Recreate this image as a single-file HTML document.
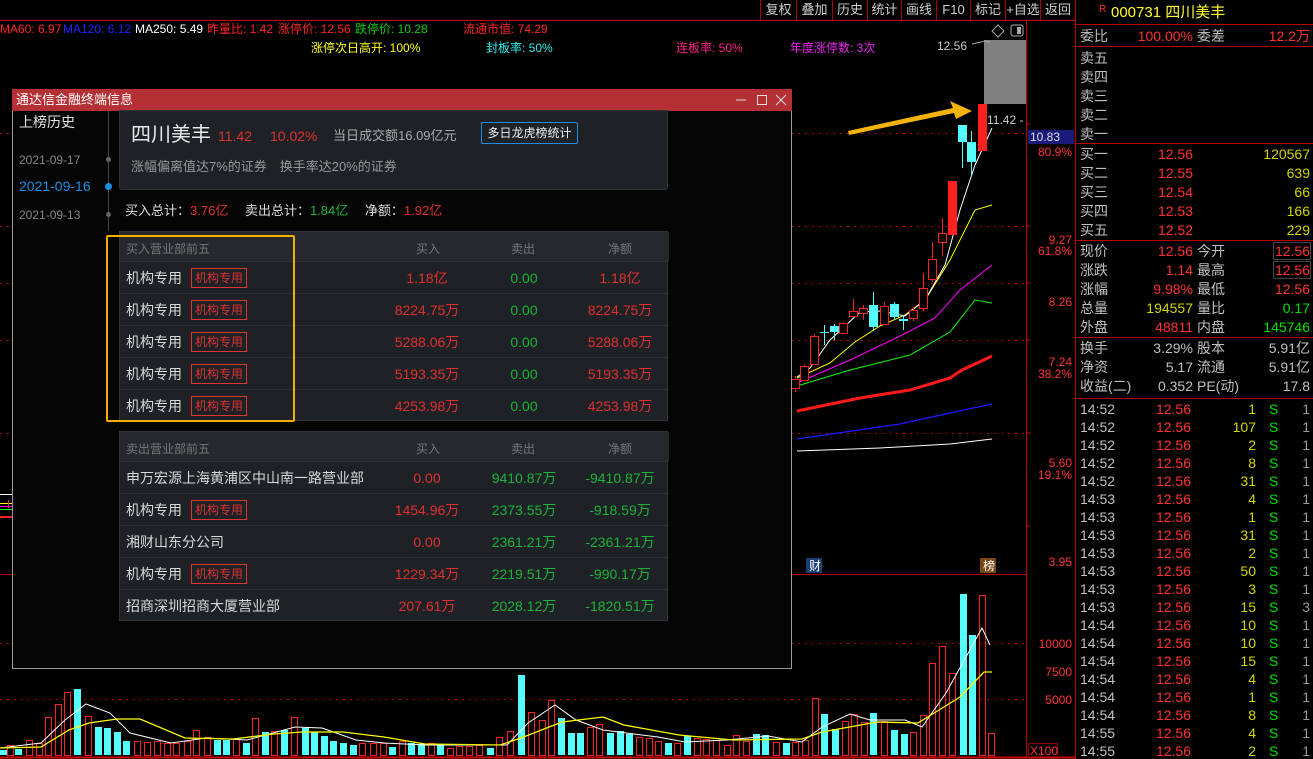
<!DOCTYPE html>
<html><head><meta charset="utf-8"><style>
*{margin:0;padding:0;box-sizing:border-box}
body{width:1313px;height:759px;background:#000;overflow:hidden;position:relative;font-family:"Liberation Sans","Noto Sans CJK SC",sans-serif}
.a{position:absolute;white-space:nowrap;line-height:1}
.t12{font-size:12px}
.rp{font-size:14px;color:#c0c0c0}
.tb span{position:absolute;top:0;height:20px;line-height:20px;font-size:13px;color:#d0d0d0;text-align:center;border-left:1px solid #a00}
.dlg{position:absolute;left:12px;top:89px;width:780px;height:580px;border:1px solid #9a9a9a;border-top:none;background:#050505}
.card{position:absolute;background:#1e2126;border:1px solid #30333a}
.row{position:absolute;left:0;width:549px;height:32px;border-top:1px solid #2d3036;font-size:14px}
.row span{position:absolute;top:9px;line-height:14px}
.nm{left:6px;color:#d8d8d8}
.tag{left:71px;top:6px!important;border:1px solid #d33;color:#d33;font-size:12px;padding:2px 3px;line-height:14px!important}
.c1,.c2,.c3{text-align:center;width:100px}
.c1{left:257px}.c2{left:354px}.c3{left:450px}
.r{color:#e03030}.g{color:#1db33a}
.hd{position:absolute;left:0;top:0;width:549px;height:29px;background:#25282d;font-size:12px;color:#777}
.hd span{position:absolute;top:8px}
</style></head><body>

<div class="tb" style="position:absolute;left:0;top:0;width:1075px;height:20px">
<span style="left:760px;width:36px">复权</span><span style="left:796px;width:36px">叠加</span><span style="left:832px;width:35px">历史</span><span style="left:867px;width:34px">统计</span><span style="left:901px;width:35px">画线</span><span style="left:936px;width:34px">F10</span><span style="left:970px;width:35px">标记</span><span style="left:1005px;width:35px">+自选</span><span style="left:1040px;width:35px">返回</span>
</div>
<div class="a" style="left:0;top:20px;width:1075px;height:1px;background:#c00"></div>

<svg class="a" style="left:0;top:0" width="1313" height="759">
<line x1="1026.5" y1="21" x2="1026.5" y2="759" stroke="#b00"/>
<line x1="1075.5" y1="0" x2="1075.5" y2="759" stroke="#b00"/>
<line x1="0" y1="574.5" x2="1026" y2="574.5" stroke="#b00"/>
<line x1="0" y1="757.5" x2="1075" y2="757.5" stroke="#c00" stroke-width="2"/>
<g stroke="#a00" stroke-dasharray="2,5">
<line x1="0" y1="133.5" x2="1026" y2="133.5"/><line x1="0" y1="226.5" x2="1026" y2="226.5"/><line x1="0" y1="283.5" x2="1026" y2="283.5"/><line x1="0" y1="340.5" x2="1026" y2="340.5"/><line x1="0" y1="433.5" x2="1026" y2="433.5"/>
<line x1="0" y1="643.5" x2="1026" y2="643.5"/><line x1="0" y1="699.5" x2="1026" y2="699.5"/>
</g>
<g stroke="#b00"><line x1="1026" y1="124" x2="1031" y2="124"/><line x1="1026" y1="226" x2="1031" y2="226"/><line x1="1026" y1="283" x2="1031" y2="283"/><line x1="1026" y1="340" x2="1031" y2="340"/><line x1="1026" y1="433" x2="1031" y2="433"/><line x1="1026" y1="526" x2="1031" y2="526"/></g>
<rect x="984" y="40" width="42" height="64" fill="#808080"/>
<!-- left-of-dialog remnants -->
<line x1="0" y1="494.5" x2="12" y2="494.5" stroke="#fff"/>
<line x1="0" y1="503.5" x2="12" y2="503.5" stroke="#ff0"/>
<line x1="0" y1="506.5" x2="12" y2="506.5" stroke="#f0f"/>
<line x1="0" y1="509.5" x2="12" y2="509.5" stroke="#1f1"/>
<line x1="0" y1="517" x2="12" y2="517" stroke="#f22" stroke-width="2"/>
<line x1="0" y1="574.5" x2="12" y2="574.5" stroke="#b00"/>
<line x1="8.5" y1="500" x2="8.5" y2="508" stroke="#f22"/>
<polyline fill="none" stroke="#fff" stroke-width="1" points="797,451 880,448 950,444 992,439"/>
<polyline fill="none" stroke="#1a1aff" stroke-width="1.3" points="797,439 900,424 950,413 992,404"/>
<polyline fill="none" stroke="#ff1a1a" stroke-width="3" points="797,411 860,398 910,390 950,378 962,370 975,364 992,356"/>
<polyline fill="none" stroke="#1f1" stroke-width="1" points="797,386 850,370 910,355 950,332 975,300 992,303"/>
<polyline fill="none" stroke="#f0f" stroke-width="1" points="797,383 850,360 900,336 935,318 960,290 992,265"/>
<polyline fill="none" stroke="#ff0" stroke-width="1" points="797,378 830,363 855,342 880,326 905,315 925,300 950,260 975,210 992,205"/>
<polyline fill="none" stroke="#fff" stroke-width="1" points="797,377 810,368 830,340 860,312 880,311 905,316 925,300 945,265 960,210 975,165 992,128"/>
<g id="cd"></g>
<g id="vol"></g>
<polyline fill="none" stroke="#fff" stroke-width="1" points="0,748 41,743 65,720 86,704 110,713 130,733 171,743 206,738 247,740 295,727 322,728 356,740 384,743 425,745 507,745 528,723 555,705 576,720 603,730 658,737 685,742 727,740 768,736 802,742 822,727 850,714 870,720 905,720 922,727 946,693 966,657 982,628 990,645"/>
<polyline fill="none" stroke="#ff0" stroke-width="1.3" points="0,748 41,747 69,730 89,723 117,719 140,719 185,738 233,739 274,734 302,732 343,732 384,737 425,744 500,745 521,738 562,722 603,717 624,725 679,735 733,740 802,739 822,732 877,722 918,723 960,697 984,672 992,672"/>
<polygon points="848,131 953,108 950,101 972,111 956,119 954,113 849,135" fill="#f6b40a"/>
<polygon points="33,490 80,416 74,412 88,405 86,421 82,418 35,491" fill="#f6b40a"/>
<polygon points="998,25 1004,31 998,37 992,31" fill="none" stroke="#aaa"/>
<rect x="1011" y="25" width="12" height="11" rx="2" fill="none" stroke="#aaa"/><rect x="1017" y="27" width="4" height="7" fill="#aaa"/>
<polyline points="972,44 985,41 990,42" fill="none" stroke="#aaa"/>
<rect x="806" y="558" width="16" height="15" fill="#1a3e6e"/><rect x="980" y="558" width="16" height="15" fill="#7a4414"/>
</svg>

<div class="a t12" style="left:0;top:23px;color:#f22">MA60: 6.97</div>
<div class="a t12" style="left:63px;top:23px;color:#22f">MA120: 6.12</div>
<div class="a t12" style="left:135px;top:23px;color:#fff">MA250: 5.49</div>
<div class="a t12" style="left:207px;top:23px;color:#f22">昨量比: 1.42</div>
<div class="a t12" style="left:278px;top:23px;color:#f22">涨停价: 12.56</div>
<div class="a t12" style="left:355px;top:23px;color:#1c1">跌停价: 10.28</div>
<div class="a t12" style="left:463px;top:23px;color:#f22">流通市值: 74.29</div>
<div class="a t12" style="left:311px;top:42px;color:#ff2">涨停次日高开: 100%</div>
<div class="a t12" style="left:486px;top:42px;color:#3ee">封板率: 50%</div>
<div class="a t12" style="left:676px;top:42px;color:#f28">连板率: 50%</div>
<div class="a t12" style="left:790px;top:42px;color:#e2e">年度涨停数: 3次</div>
<div class="a t12" style="left:937px;top:40px;color:#ccc">12.56</div>
<div class="a t12" style="left:987px;top:114px;color:#ccc">11.42 -</div>
<div class="a t12" style="left:809px;top:560px;color:#fff">财</div>
<div class="a t12" style="left:983px;top:560px;color:#fff">榜</div>
<div class="a t12" style="left:1028px;top:130px;width:46px;height:14px;background:#1a1a7a;color:#ddd;padding-left:2px;line-height:14px">10.83</div>
<div class="a t12" style="left:1028px;top:146px;width:44px;text-align:right;color:#f33">80.9%</div>
<div class="a t12" style="left:1028px;top:234px;width:44px;text-align:right;color:#f33">9.27</div>
<div class="a t12" style="left:1028px;top:245px;width:44px;text-align:right;color:#f33">61.8%</div>
<div class="a t12" style="left:1028px;top:296px;width:44px;text-align:right;color:#f33">8.26</div>
<div class="a t12" style="left:1028px;top:356px;width:44px;text-align:right;color:#f33">7.24</div>
<div class="a t12" style="left:1028px;top:368px;width:44px;text-align:right;color:#f33">38.2%</div>
<div class="a t12" style="left:1028px;top:457px;width:44px;text-align:right;color:#f33">5.60</div>
<div class="a t12" style="left:1028px;top:469px;width:44px;text-align:right;color:#f33">19.1%</div>
<div class="a t12" style="left:1028px;top:556px;width:44px;text-align:right;color:#f33">3.95</div>
<div class="a t12" style="left:1028px;top:638px;width:44px;text-align:right;color:#f33">10000</div>
<div class="a t12" style="left:1028px;top:666px;width:44px;text-align:right;color:#f33">7500</div>
<div class="a t12" style="left:1028px;top:694px;width:44px;text-align:right;color:#f33">5000</div>
<div class="a t12" style="left:1028px;top:743px;width:30px;color:#f33;border:1px solid #800;padding:1px">X100</div>

<div id="rpanel"></div>

<div class="a" style="left:12px;top:89px;width:780px;height:22px;background:#b53035;color:#fff;font-size:13px;padding:4px 0 0 4px">通达信金融终端信息
<svg style="position:absolute;left:724px;top:4px" width="52" height="14"><line x1="0" y1="7" x2="10" y2="7" stroke="#ddd"/><rect x="21.5" y="2.5" width="9" height="9" fill="none" stroke="#ddd"/><path d="M40 2L50 12M50 2L40 12" stroke="#ddd"/></svg></div>
<div class="dlg" style="top:111px;height:558px">
 <div class="a" style="left:6px;top:4px;font-size:14px;color:#e6e6e6">上榜历史</div>
 <div class="a" style="left:95px;top:0;width:1px;height:120px;background:#444"></div>
 <div class="a" style="left:93px;top:46px;width:5px;height:5px;border-radius:50%;background:#666"></div>
 <div class="a" style="left:92px;top:72px;width:7px;height:7px;border-radius:50%;background:#1a8fe0"></div>
 <div class="a" style="left:93px;top:101px;width:5px;height:5px;border-radius:50%;background:#666"></div>
 <div class="a" style="left:6px;top:43px;font-size:12px;color:#888">2021-09-17</div>
 <div class="a" style="left:6px;top:68px;font-size:14px;color:#1a8fe0">2021-09-16</div>
 <div class="a" style="left:6px;top:98px;font-size:12px;color:#888">2021-09-13</div>

 <div class="card" style="left:106px;top:-1px;width:549px;height:80px;border-radius:0 0 3px 3px">
  <div class="a" style="left:11px;top:14px;font-size:20px;color:#e8e8e8">四川美丰</div>
  <div class="a" style="left:98px;top:18px;font-size:14px;color:#e03030">11.42</div>
  <div class="a" style="left:150px;top:18px;font-size:14px;color:#e03030">10.02%</div>
  <div class="a" style="left:213px;top:18px;font-size:13px;color:#aaa">当日成交额16.09亿元</div>
  <div class="a" style="left:361px;top:11px;width:97px;height:22px;border:1px solid #1e8fe0;border-radius:2px;font-size:12px;color:#eee;text-align:center;line-height:20px">多日龙虎榜统计</div>
  <div class="a" style="left:11px;top:49px;font-size:13px;color:#999">涨幅偏离值达7%的证券　换手率达20%的证券</div>
 </div>
 <div class="a" style="left:112px;top:93px;font-size:13px;color:#ddd">买入总计：<span class="r">3.76亿</span>　 卖出总计：<span class="g">1.84亿</span>　 净额：<span class="r">1.92亿</span></div>

 <div class="card" style="left:106px;top:120px;width:549px;height:190px" id="t1">
  <div class="hd"><span style="left:6px">买入营业部前五</span><span style="left:296px">买入</span><span style="left:391px">卖出</span><span style="left:488px">净额</span></div>
 </div>
 <div class="card" style="left:106px;top:320px;width:549px;height:190px" id="t2">
  <div class="hd"><span style="left:6px">卖出营业部前五</span><span style="left:296px">买入</span><span style="left:391px">卖出</span><span style="left:488px">净额</span></div>
 </div>
 <div class="a" style="left:93px;top:124px;width:189px;height:187px;border:2px solid #f5b000;border-radius:2px"></div>
</div>

<script>
function rows(id,data){var el=document.getElementById(id),h='';data.forEach(function(d,i){h+='<div class="row" style="top:'+(29+i*32)+'px"><span class="nm">'+d[0]+'</span>'+(d[1]?'<span class="tag">机构专用</span>':'')+'<span class="c1 r">'+d[2]+'</span><span class="c2 g">'+d[3]+'</span><span class="c3 '+d[5]+'">'+d[4]+'</span></div>'});el.innerHTML+=h;}
var J='机构专用';
rows('t1',[[J,1,'1.18亿','0.00','1.18亿','r'],[J,1,'8224.75万','0.00','8224.75万','r'],[J,1,'5288.06万','0.00','5288.06万','r'],[J,1,'5193.35万','0.00','5193.35万','r'],[J,1,'4253.98万','0.00','4253.98万','r']]);
rows('t2',[['申万宏源上海黄浦区中山南一路营业部',0,'0.00','9410.87万','-9410.87万','g'],[J,1,'1454.96万','2373.55万','-918.59万','g'],['湘财山东分公司',0,'0.00','2361.21万','-2361.21万','g'],[J,1,'1229.34万','2219.51万','-990.17万','g'],['招商深圳招商大厦营业部',0,'207.61万','2028.12万','-1820.51万','g']]);

var NS='http://www.w3.org/2000/svg';
function R(g,x,y,w,h,fill,stroke){var r=document.createElementNS(NS,'rect');r.setAttribute('x',x);r.setAttribute('y',y);r.setAttribute('width',w);r.setAttribute('height',Math.max(h,1));r.setAttribute('fill',fill);if(stroke)r.setAttribute('stroke',stroke);g.appendChild(r);}
function L(g,x1,y1,x2,y2,c){var l=document.createElementNS(NS,'line');l.setAttribute('x1',x1);l.setAttribute('y1',y1);l.setAttribute('x2',x2);l.setAttribute('y2',y2);l.setAttribute('stroke',c);g.appendChild(l);}
var cd=document.getElementById('cd');
var C=[[795,379,388,376,392,'rh'],[804,366,380,365,381,'rh'],[814,336,364,334,365,'rh'],[824,332,333,325,345,'c'],[834,326,332,324,340,'c'],[843,323,333,322,334,'rh'],[853,311,316,299,317,'rh'],[863,308,313,305,320,'rh'],[873,305,327,292,331,'c'],[884,306,324,302,325,'rh'],[894,304,317,302,320,'c'],[903,319,321,315,330,'c'],[913,310,318,307,321,'rh'],[923,288,308,273,311,'rh'],[932,259,279,242,282,'rh'],[942,233,242,218,256,'rh'],[952,181,235,181,235,'rf'],[962,125,142,125,168,'c'],[971,142,162,131,175,'c'],[982,104,151,104,151,'rf']];
C.forEach(function(c){var x=c[0],col=c[5]=='c'?'#54fcfc':'#ff2020';L(cd,x+.5,c[3],x+.5,c[4],col);if(c[5]=='rh')R(cd,x-3.5,c[1]+.5,8,c[2]-c[1],'#000',col);else R(cd,x-4,c[1],9,c[2]-c[1],col);});
var V=[[0,'c',510],[10,'r',495],[22,'c',508],[38,'r',480],[52,'r',490],[66,'r',410],[80,'r',372],[94,'r',336],[108,'c',327],[124,'r',408],[138,'c',441],[152,'c',443],[166,'c',456],[180,'c',483],[195,'r',484],[210,'r',485],[225,'r',483],[239,'r',490],[253,'r',490],[268,'r',482],[282,'r',450],[297,'r',470],[312,'c',480],[326,'c',480],[340,'r',478],[354,'c',489],[368,'r',413],[382,'c',456],[396,'r',452],[410,'c',450],[424,'r',411],[440,'c',443],[454,'c',457],[468,'c',468],[482,'c',483],[496,'c',489],[510,'c',495],[524,'r',490],[540,'r',488],[554,'r',490],[568,'c',500],[582,'r',484],[596,'c',490],[610,'c',492],[624,'r',490],[638,'c',493],[652,'r',505],[666,'r',498],[680,'r',497],[694,'r',496],[710,'c',503],[724,'r',470],[740,'r',454],[756,'c',285],[770,'r',396],[786,'r',420],[800,'r',360],[814,'c',413],[828,'c',458],[842,'c',458],[856,'r',441],[870,'r',432],[886,'c',459],[900,'c',452],[914,'c',462],[928,'r',472],[942,'r',473],[956,'r',484],[970,'c',489],[984,'r',489],[998,'c',467],[1012,'r',474],[1026,'r',476],[1040,'r',479],[1056,'r',495],[1070,'r',465],[1084,'r',482],[1098,'c',462],[1112,'c',466],[1128,'r',487],[1142,'c',488],[1156,'r',485],[1170,'r',480],[1184,'r',354],[1198,'c',402],[1214,'c',447],[1228,'r',424],[1242,'r',403],[1256,'r',426],[1270,'c',398],[1286,'r',422],[1300,'c',450],[1314,'c',462],[1328,'r',456],[1342,'r',405],[1356,'r',249],[1370,'r',198],[1384,'r',280],[1400,'c',42],[1414,'c',164],[1428,'r',45],[1442,'r',460]];
var vg=document.getElementById('vol');
V.forEach(function(v){var x=Math.round(v[0]/1.459),y=Math.round(580+v[2]/3);if(v[1]=='c')R(vg,x,y,7,755-y,'#54fcfc');else R(vg,x+.5,y+.5,6,755-y,'none','#ff2020');});

var rp='',Y='#d4d400',RD='#ff3232',G='#00e000',GR='#c0c0c0';
function t(x,y,s,c,al,w,fs){rp+='<div class="a" style="left:'+x+'px;top:'+y+'px;color:'+c+';font-size:'+(fs||14)+'px;'+(al?'width:'+w+'px;text-align:right;':'')+'">'+s+'</div>';}
function hl(y){rp+='<div class="a" style="left:1076px;top:'+y+'px;width:237px;height:1px;background:#b00"></div>';}
t(1099,5,'R',RD,0,0,10);t(1111,5,'000731 四川美丰','#ffff30',0,0,15);
hl(24);t(1080,29,'委比',GR);t(1120,29,'100.00%',RD,1,73);t(1197,29,'委差',GR);t(1240,29,'12.2万',RD,1,70);
hl(46);['卖五','卖四','卖三','卖二','卖一'].forEach(function(s,i){t(1080,51+i*19,s,GR)});
hl(143);var b=[['买一','12.56','120567'],['买二','12.55','639'],['买三','12.54','66'],['买四','12.53','166'],['买五','12.52','229']];
b.forEach(function(r,i){var y=147+i*19;t(1080,y,r[0],GR);t(1120,y,r[1],RD,1,73);t(1230,y,r[2],Y,1,80);});
hl(240);var q=[['现价','12.56',RD,'今开','12.56',RD],['涨跌','1.14',RD,'最高','12.56',RD],['涨幅','9.98%',RD,'最低','12.56',RD],['总量','194557',Y,'量比','0.17',G],['外盘','48811',RD,'内盘','145746',G]];
q.forEach(function(r,i){var y=244+i*19;t(1080,y,r[0],GR);t(1120,y,r[1],r[2],1,73);t(1197,y,r[3],GR);t(1240,y,r[4],r[5],1,70);});
rp+='<div class="a" style="left:1273px;top:242px;width:38px;height:18px;border:1px solid #444"></div><div class="a" style="left:1273px;top:261px;width:38px;height:18px;border:1px solid #444"></div>';
hl(337);var s=[['换手','3.29%','股本','5.91亿'],['净资','5.17','流通','5.91亿'],['收益(二)','0.352','PE(动)','17.8']];
s.forEach(function(r,i){var y=341+i*19;t(1080,y,r[0],GR);t(1120,y,r[1],GR,1,73);t(1197,y,r[2],GR);t(1240,y,r[3],GR,1,70);});
hl(398);
var tk=[['14:52',1,1],['14:52',107,1],['14:52',2,1],['14:52',8,1],['14:52',31,1],['14:53',4,1],['14:53',1,1],['14:53',31,1],['14:53',2,1],['14:53',50,1],['14:53',3,1],['14:53',15,3],['14:54',10,1],['14:54',10,1],['14:54',15,1],['14:54',4,1],['14:54',1,1],['14:54',8,1],['14:55',4,1],['14:55',2,1]];
tk.forEach(function(r,i){var y=402+i*18;t(1080,y,r[0],GR);t(1120,y,'12.56',RD,1,71);t(1200,y,r[1],Y,1,56);t(1269,y,'S',G);t(1290,y,r[2],'#999',1,20);});
document.getElementById('rpanel').innerHTML=rp;
</script>
</body></html>
